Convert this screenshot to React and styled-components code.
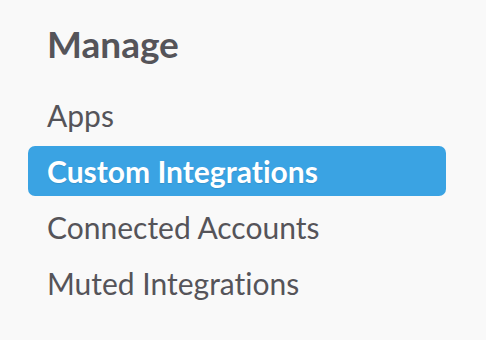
import React from 'react'
import styled, { createGlobalStyle } from 'styled-components'

const GlobalStyle = createGlobalStyle`
    html, body {
        margin:0;
        padding:0;
        background-color:#f9f9f9;
    }
    body {
        font-family:Lato, "Open Sans", sans-serif;
        font-variant-ligatures:none;
        font-feature-settings:"liga" 0, "clig" 0;
        -webkit-font-smoothing:antialiased;
    }
`

const items = ['Apps', 'Custom Integrations', 'Connected Accounts', 'Muted Integrations']

function App() {
    return (
        <>
            <GlobalStyle/>
            <Sidebar>
                <Heading>Manage</Heading>
                <Menu>
                    {items.map(item => (
                        <Item key={item} active={item === 'Custom Integrations'}>{item}</Item>
                    ))}
                </Menu>
            </Sidebar>
        </>
    )
}

export default App

const Sidebar=styled.div`
    width:418px;
    padding:22px 0 0 28px;
`

const Heading=styled.h2`
    margin:0 0 24px;
    padding-left:19px;
    font-size:37px;
    font-weight:700;
    line-height:44px;
    color:#555459;
`

const Menu=styled.ul`
    list-style:none;
    margin:0;
    padding:0;
    display:flex;
    flex-direction:column;
    gap:6px;
`

const Item=styled.li.withConfig({ shouldForwardProp: p => p !== 'active' })`
    height:50px;
    display:flex;
    align-items:center;
    padding-left:19px;
    border-radius:7px;
    font-size:30px;
    font-weight:${p => p.active ? 700 : 400};
    color:${p => p.active ? '#ffffff' : '#555459'};
    background-color:${p => p.active ? '#3aa3e3' : 'transparent'};
    text-shadow:${p => p.active ? '0 1px 1px rgba(0,0,0,0.1)' : 'none'};
`
